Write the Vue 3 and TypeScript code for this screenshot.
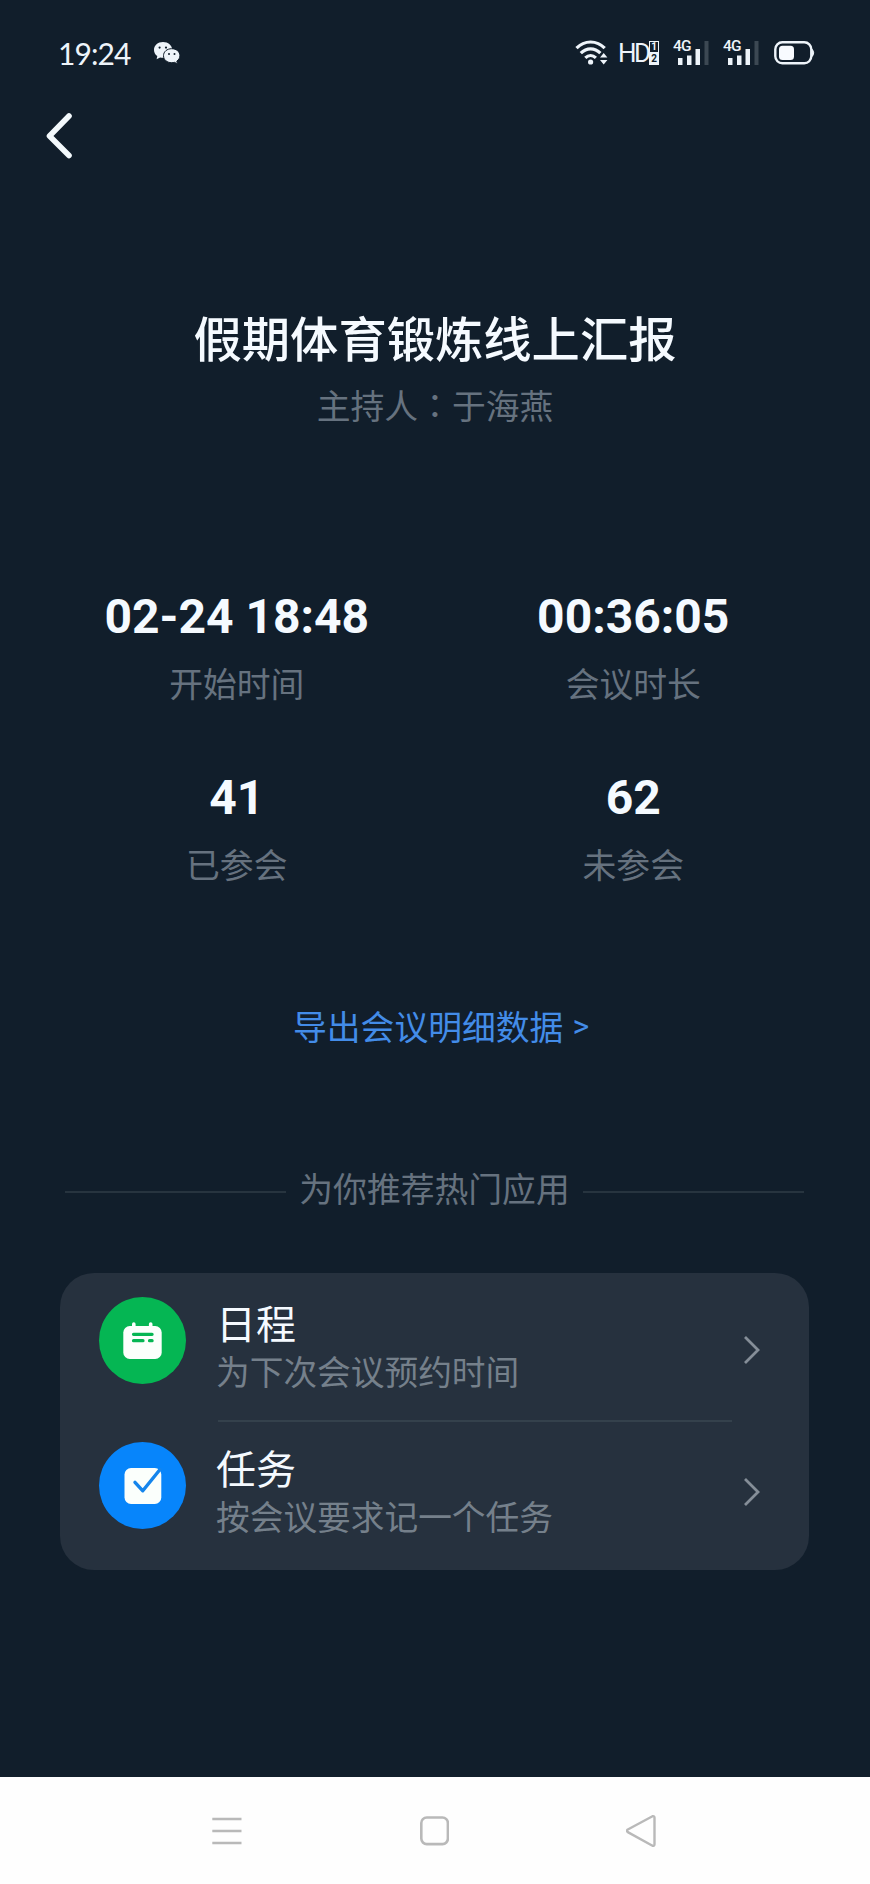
<script setup lang="ts">
interface Stat {
  value: string
  label: string
}

interface AppEntry {
  icon: 'calendar' | 'task'
  name: string
  hint: string
}

const stats: Stat[] = [
  { value: '02-24 18:48', label: '开始时间' },
  { value: '00:36:05', label: '会议时长' },
  { value: '41', label: '已参会' },
  { value: '62', label: '未参会' },
]

const apps: AppEntry[] = [
  { icon: 'calendar', name: '日程', hint: '为下次会议预约时间' },
  { icon: 'task', name: '任务', hint: '按会议要求记一个任务' },
]
</script>

<template>
  <div class="screen">
    <header class="status">
      <span class="clock">19:24</span>
      <svg class="wechat" width="28" height="24" viewBox="0 0 28 24">
        <path d="M10 1C4.800 1 1 4.500 1 9c0 2.600 1.300 4.700 3.300 6.100L3.600 18.300l3.500-1.900c1 .3 1.900.4 2.900.4 5.200 0 9.200-3.300 9.200-7.800S15.200 1 10 1z" fill="#eef4fa" />
        <circle cx="6.600" cy="6.600" r="1.100" fill="#111e2b" />
        <circle cx="13" cy="6.600" r="1.100" fill="#111e2b" />
        <path d="M18.700 7.700c-4.700 0-8.200 3-8.200 7s3.500 7 8.200 7c1 0 1.900-.1 2.700-.4l3.100 1.600-.7-2.800c1.900-1.300 3.100-3.200 3.100-5.400 0-4-3.500-7-8.200-7z" fill="#eef4fa" stroke="#111e2b" stroke-width="1" />
        <circle cx="16" cy="13" r="1" fill="#111e2b" />
        <circle cx="21.500" cy="13" r="1" fill="#111e2b" />
      </svg>
      <div class="indicators">
        <svg class="wifi" width="34" height="28" viewBox="0 0 34 28">
          <g fill="none" stroke="#eef4fa" stroke-width="3.200">
            <path d="M1.500 9.200C9.500.9 21.700.9 29.700 9.200" />
            <path d="M5.800 14.200c5.800-5.800 13.800-5.800 19.600 0" />
            <path d="M10.300 18.900c3.200-3 7.400-3 10.600 0" />
          </g>
          <circle cx="15.600" cy="23" r="2.600" fill="#eef4fa" />
          <path d="M25 18.500 28.700 14l3.700 4.500zM25 21h7.400l-3.700 4.500z" fill="#eef4fa" />
        </svg>
        <div class="hd">
          <span class="hd-text">HD</span>
          <span class="sims"><b class="outlined">1</b><b>2</b></span>
        </div>
        <div v-for="n in 2" :key="n" class="signal">
          <svg width="36" height="26" viewBox="0 0 36 26">
            <rect x="5" y="18" width="4.500" height="7" fill="#eef4fa" />
            <rect x="14" y="15.500" width="4.500" height="9.500" fill="#eef4fa" />
            <rect x="22.500" y="9" width="4.500" height="16" fill="#eef4fa" />
            <rect x="31.500" y="1" width="4" height="24" fill="#3c4853" />
          </svg>
          <span class="gen">4G</span>
        </div>
        <svg class="battery" width="42" height="24" viewBox="0 0 42 24">
          <rect x="1.300" y="1.300" width="36" height="21" rx="7" fill="none" stroke="#eef4fa" stroke-width="2.400" />
          <rect x="5" y="4.800" width="15" height="14.200" rx="3.500" fill="#f8fbff" />
          <path d="M38.500 8.500q2.500 3.400 0 6.800z" fill="#eef4fa" stroke="#eef4fa" />
        </svg>
      </div>
    </header>

    <nav class="topbar">
      <svg width="28" height="48" viewBox="0 0 28 48">
        <path d="M24 4 4.500 24 24 43.500" fill="none" stroke="#f3f9fc" stroke-width="5.600" stroke-linecap="round" stroke-linejoin="round" />
      </svg>
    </nav>

    <main>
      <h1 class="title">假期体育锻炼线上汇报</h1>
      <p class="host">主持人：于海燕</p>

      <section class="stats">
        <div v-for="s in stats" :key="s.label" class="stat">
          <div class="value">{{ s.value }}</div>
          <div class="label">{{ s.label }}</div>
        </div>
      </section>

      <a class="export"><span>导出会议明细数据</span><span class="gt">&gt;</span></a>

      <div class="recommend">为你推荐热门应用</div>

      <section class="card">
        <div v-for="a in apps" :key="a.name" class="row" :class="a.icon">
          <div class="badge">
            <svg v-if="a.icon === 'calendar'" width="40" height="38" viewBox="0 0 40 38">
              <rect x=".3" y="4" width="38.400" height="33" rx="6.500" fill="#fbfffc" />
              <path d="M10.800 2v5M27.700 2v5" stroke="#fbfffc" stroke-width="3.600" stroke-linecap="round" />
              <path d="M10.500 12.300h18.600M10.500 18.700h9.500M26.500 18.700h2.600" stroke="#05b653" stroke-width="3.200" stroke-linecap="round" />
            </svg>
            <svg v-else width="40" height="38" viewBox="0 0 40 38">
              <rect x="1.500" y="1" width="36.800" height="36" rx="6.500" fill="#fbfffc" />
              <path d="M12 15.300l7.800 8.500L37 2.500" fill="none" stroke="#1585ec" stroke-width="3.400" stroke-linecap="round" stroke-linejoin="round" />
            </svg>
          </div>
          <div class="info">
            <div class="name">{{ a.name }}</div>
            <div class="hint">{{ a.hint }}</div>
          </div>
          <svg class="chevron" width="18" height="30" viewBox="0 0 18 30">
            <path d="M2 2l13 13L2 28" fill="none" stroke="#858e98" stroke-width="2.800" />
          </svg>
        </div>
      </section>
    </main>

    <footer class="system">
      <svg width="30" height="34" viewBox="0 0 30 34">
        <path d="M.3 5h29.200M.3 17h29.200M.3 29h29.200" stroke="#b9b9b9" stroke-width="2.400" />
      </svg>
      <svg width="30" height="34" viewBox="0 0 30 34">
        <rect x="2.300" y="3.500" width="26.600" height="26.600" rx="5.500" fill="none" stroke="#b9b9b9" stroke-width="2.600" />
      </svg>
      <svg width="30" height="34" viewBox="0 0 30 34">
        <path d="M26.500 2.200 1.800 15.500q-1.700 1.300 0 2.600l24.700 13.700q2 .4 2-1.600V3.800q0-2-2-1.600z" fill="none" stroke="#b9b9b9" stroke-width="2.400" stroke-linejoin="round" />
      </svg>
    </footer>
  </div>
</template>

<style>
body {
  margin: 0;
  background: #111e2b;
}
</style>

<style scoped>
.screen {
  box-sizing: border-box;
  width: 870px;
  height: 1884px;
  display: flex;
  flex-direction: column;
  background: #111e2b;
  color: #f5faff;
  font-family: "Noto Sans CJK SC", sans-serif;
  white-space: nowrap;
  overflow: hidden;
}
.status {
  height: 106px;
  display: flex;
  align-items: center;
  padding: 0 54px 0 58px;
}
.clock {
  width: 95px;
  font: 400 30px/38px Lato, sans-serif;
  letter-spacing: -0.9px;
  color: #eef4fa;
}
.indicators {
  display: flex;
  align-items: center;
  margin-left: auto;
}
.hd {
  display: flex;
  align-items: center;
  margin-left: 9px;
  width: 42px;
}
.hd-text {
  width: 31px;
  font: 400 26px/28px Roboto, sans-serif;
  letter-spacing: -2.5px;
  color: #eef4fa;
}
.sims {
  width: 10px;
  display: flex;
  flex-direction: column;
}
.sims b {
  box-sizing: border-box;
  width: 10px;
  height: 12px;
  font: 700 10px/12px Roboto, sans-serif;
  text-align: center;
  color: #111e2b;
  background: #eef4fa;
}
.sims .outlined {
  border: 1.5px solid #eef4fa;
  line-height: 10px;
  color: #eef4fa;
  background: none;
}
.signal {
  position: relative;
  width: 36px;
  height: 26px;
  margin-left: 14px;
}
.hd + .signal {
  margin-left: 13px;
}
.gen {
  position: absolute;
  left: 0;
  top: 0;
  font: 500 15.500px/13px Roboto, sans-serif;
  letter-spacing: -0.8px;
  color: #eef4fa;
}
.battery {
  margin-left: 15px;
}
.topbar {
  height: 60px;
  display: flex;
  align-items: center;
  padding-left: 44.500px;
}
main {
  flex: 1;
  display: flex;
  flex-direction: column;
}
.title {
  margin: 140px 0 0;
  text-align: center;
  font-size: 48.3px;
  font-weight: 500;
  line-height: 60px;
}
.host {
  margin: 19px 0 0;
  text-align: center;
  font-family: "Noto Sans CJK TC", "Noto Sans CJK SC", sans-serif;
  font-size: 33.8px;
  line-height: 40px;
  color: #66727f;
}
.stats {
  display: grid;
  grid-template-columns: 396.5px 396.5px;
  row-gap: 65px;
  margin: 162px 0 0 38.5px;
}
.stat {
  text-align: center;
}
.value {
  font: 700 48px/60px Roboto, sans-serif;
}
.label {
  margin-top: 16px;
  font-size: 33.8px;
  line-height: 40px;
  color: #66727f;
}
.export {
  display: flex;
  height: 40px;
  margin: 122px 0 0 293px;
  font-size: 33.8px;
  line-height: 40px;
  color: #438ce8;
}
.gt {
  margin-left: 9px;
  font-family: Roboto, sans-serif;
  font-size: 32px;
}
.recommend {
  display: flex;
  align-items: center;
  gap: 13px;
  margin: 122px 66px 0 65px;
  font-size: 33.8px;
  line-height: 40px;
  color: #66727f;
}
.recommend::before,
.recommend::after {
  content: "";
  flex: 1;
  height: 2px;
  margin-top: 7px;
  background: #27343f;
}
.card {
  box-sizing: border-box;
  width: 749px;
  height: 297px;
  margin: 65px 0 0 60px;
  padding: 24px 46px 0 39px;
  border-radius: 34px;
  background: #26313e;
}
.row {
  display: flex;
  height: 145px;
}
.badge {
  width: 87px;
  height: 87px;
  flex: none;
  display: flex;
  align-items: center;
  justify-content: center;
  border-radius: 50%;
}
.calendar .badge {
  background: #05b653;
}
.task .badge {
  background: #0785fb;
}
.info {
  box-sizing: border-box;
  width: 516px;
  height: 125px;
  margin-left: 30px;
}
.calendar .info {
  background: linear-gradient(#34414c, #34414c) 2px 100% / 516px 2px no-repeat;
}
.name {
  font-size: 40px;
  line-height: 50px;
}
.hint {
  line-height: 40px;
  margin-top: 4px;
  font-size: 33.7px;
  color: #75808b;
}
.chevron {
  margin: 38px 0 0 11px;
}
.task .chevron {
  margin-top: 35px;
}
.system {
  height: 107px;
  display: flex;
  align-items: center;
  justify-content: space-between;
  padding: 0 214px 0 212px;
  background: #fefefe;
}
</style>
